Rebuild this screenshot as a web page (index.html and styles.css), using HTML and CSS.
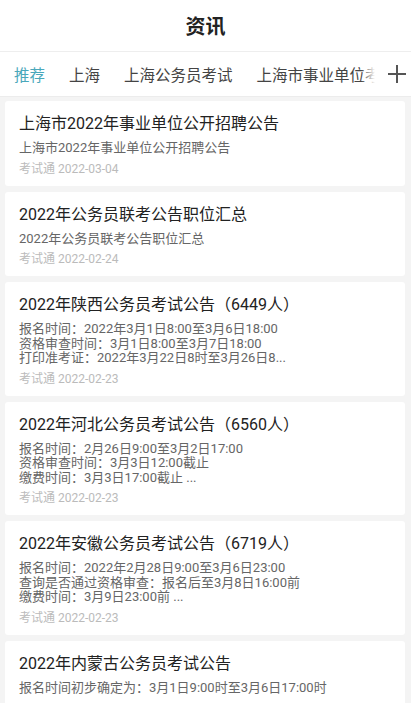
FILE: index.html
```html
<!DOCTYPE html>
<html lang="zh-CN">
<head>
  <meta charset="UTF-8" />
  <meta name="viewport" content="width=device-width, initial-scale=1.0" />
  <title>资讯</title>
  <link rel="stylesheet" href="styles.css">
</head>
<body>
  <header class="topbar">资讯</header>

  <nav class="tabs">
    <div class="tab-list">
      <span class="tab active">推荐</span>
      <span class="tab">上海</span>
      <span class="tab">上海公务员考试</span>
      <span class="tab">上海市事业单位考试</span>
    </div>
    <div class="tab-add">
      <svg width="18" height="18" viewBox="0 0 18 18"><path d="M9 0v18M0 9h18" stroke="#555" stroke-width="2" fill="none"/></svg>
    </div>
  </nav>

  <main class="list">
    <div class="card">
      <div class="title">上海市2022年事业单位公开招聘公告</div>
      <div class="desc">上海市2022年事业单位公开招聘公告</div>
      <div class="meta">考试通 2022-03-04</div>
    </div>

    <div class="card">
      <div class="title">2022年公务员联考公告职位汇总</div>
      <div class="desc">2022年公务员联考公告职位汇总</div>
      <div class="meta">考试通 2022-02-24</div>
    </div>

    <div class="card">
      <div class="title">2022年陕西公务员考试公告（6449人）</div>
      <div class="desc">报名时间：2022年3月1日8:00至3月6日18:00<br>资格审查时间：3月1日8:00至3月7日18:00<br>打印准考证：2022年3月22日8时至3月26日8...</div>
      <div class="meta">考试通 2022-02-23</div>
    </div>

    <div class="card">
      <div class="title">2022年河北公务员考试公告（6560人）</div>
      <div class="desc">报名时间：2月26日9:00至3月2日17:00<br>资格审查时间：3月3日12:00截止<br>缴费时间：3月3日17:00截止 ...</div>
      <div class="meta">考试通 2022-02-23</div>
    </div>

    <div class="card">
      <div class="title">2022年安徽公务员考试公告（6719人）</div>
      <div class="desc">报名时间：2022年2月28日9:00至3月6日23:00<br>查询是否通过资格审查：报名后至3月8日16:00前<br>缴费时间：3月9日23:00前 ...</div>
      <div class="meta">考试通 2022-02-23</div>
    </div>

    <div class="card">
      <div class="title">2022年内蒙古公务员考试公告</div>
      <div class="desc">报名时间初步确定为：3月1日9:00时至3月6日17:00时</div>
    </div>
  </main>
</body>
</html>
```

FILE: styles.css
```css
* { box-sizing: border-box; }
body { margin: 0; background: #f4f4f4; font-family: Roboto, "Noto Sans CJK SC", sans-serif; color: #222; overflow: hidden; }

.topbar { height: 52px; background: #fff; display: flex; align-items: center; justify-content: center; font-size: 20px; font-weight: bold; color: #222; border-bottom: 1px solid #eee; }

.tabs { height: 45px; background: #fff; display: flex; align-items: center; position: relative; border-bottom: 1px solid #ececec; }
.tab-list { flex: 1; display: flex; gap: 24px; padding-left: 14px; white-space: nowrap; overflow: hidden; font-size: 15.5px; color: #444; }
.tab.active { color: #4aa8bb; }
.tab-add { position: absolute; right: 0; top: 0; bottom: 0; width: 36px; display: flex; align-items: center; justify-content: flex-end; padding-right: 5px; background: #fff; }
.tab-add::before { content: ""; position: absolute; left: -14px; top: 0; bottom: 0; width: 14px; background: linear-gradient(to right, rgba(255,255,255,0), #fff); }

.list { padding: 4px 6px 0 5px; display: flex; flex-direction: column; gap: 6px; }
.card { background: #fff; border-radius: 3px; padding: 11px 14px 10px; }
.title { font-size: 16px; line-height: 24px; color: #222; }
.desc { margin-top: 5px; font-size: 13px; line-height: 14.5px; color: #666; }
.meta { margin-top: 6px; font-size: 12px; line-height: 14px; color: #bbb; }
```
